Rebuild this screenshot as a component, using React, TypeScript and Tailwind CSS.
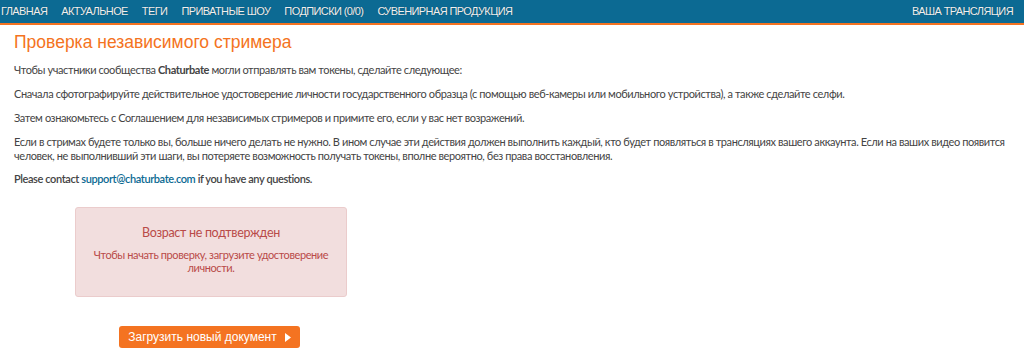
export default function App() {
  const nav = ["ГЛАВНАЯ", "АКТУАЛЬНОЕ", "ТЕГИ", "ПРИВАТНЫЕ ШОУ", "ПОДПИСКИ (0/0)", "СУВЕНИРНАЯ ПРОДУКЦИЯ"];
  const body = "font-['Lato',sans-serif]";

  return (
    <div className="w-[1024px] h-[360px] bg-white overflow-hidden">
      <div className="h-[25px] bg-[#0c6a93] border-b-2 border-[#f47321] flex items-center justify-between font-['Liberation_Sans',Arial,sans-serif] text-[11px] tracking-[-0.6px] text-[#f0f0f0] [text-shadow:0_0_1px_rgba(0,0,0,0.4)]">
        <div className="flex gap-[14px] pl-[1px]">
          {nav.map((n) => (
            <span key={n}>{n}</span>
          ))}
        </div>
        <span className="pr-[11px]">ВАША ТРАНСЛЯЦИЯ</span>
      </div>

      <div className="px-[14px]">
        <h1 className="mt-[6px] text-[17.5px] leading-[22px] text-[#f47321] font-['Liberation_Sans',Arial,sans-serif]">
          Проверка независимого стримера
        </h1>

        <div className={`${body} mr-[-14px] text-[11px] leading-[14px] tracking-[-0.4px] text-[#444]`}>
          <p className="mt-[10px]">
            Чтобы участники сообщества <span className="font-bold">Chaturbate</span> могли отправлять вам токены, сделайте следующее:
          </p>
          <p className="mt-[10px]">
            Сначала сфотографируйте действительное удостоверение личности государственного образца (с помощью веб-камеры или мобильного устройства), а также сделайте селфи.
          </p>
          <p className="mt-[10px]">
            Затем ознакомьтесь с Соглашением для независимых стримеров и примите его, если у вас нет возражений.
          </p>
          <p className="mt-[10px]">
            Если в стримах будете только вы, больше ничего делать не нужно. В ином случае эти действия должен выполнить каждый, кто будет появляться в трансляциях вашего аккаунта. Если на ваших видео появится человек, не выполнивший эти шаги, вы потеряете возможность получать токены, вполне вероятно, без права восстановления.
          </p>
          <p className="mt-[9px] font-semibold">
            Please contact <span className="text-[#0c6a93]">support@chaturbate.com</span> if you have any questions.
          </p>
        </div>

        <div className="ml-[61px] mt-[21px] w-[272px] h-[90px] bg-[#f2dede] border border-[#ebcccc] rounded-[3px] flex flex-col items-center text-center text-[#b94a48]">
          <div className={`${body} mt-[17px] text-[12.5px] leading-[16px] tracking-[-0.3px]`}>Возраст не подтвержден</div>
          <div className={`${body} mt-[7px] text-[11px] leading-[13px] tracking-[-0.4px] w-[250px]`}>
            Чтобы начать проверку, загрузите удостоверение личности.
          </div>
        </div>

        <div className="ml-[105px] mt-[29px]">
          <button className="h-[22px] w-[181px] bg-[#f47321] rounded-[3px] text-white text-[12px] font-['Liberation_Sans',Arial,sans-serif] flex items-center justify-center gap-[8px]">
            Загрузить новый документ
            <svg width="6" height="9" viewBox="0 0 6 9"><path d="M0 0 L6 4.5 L0 9 Z" fill="white" /></svg>
          </button>
        </div>
      </div>
    </div>
  );
}
